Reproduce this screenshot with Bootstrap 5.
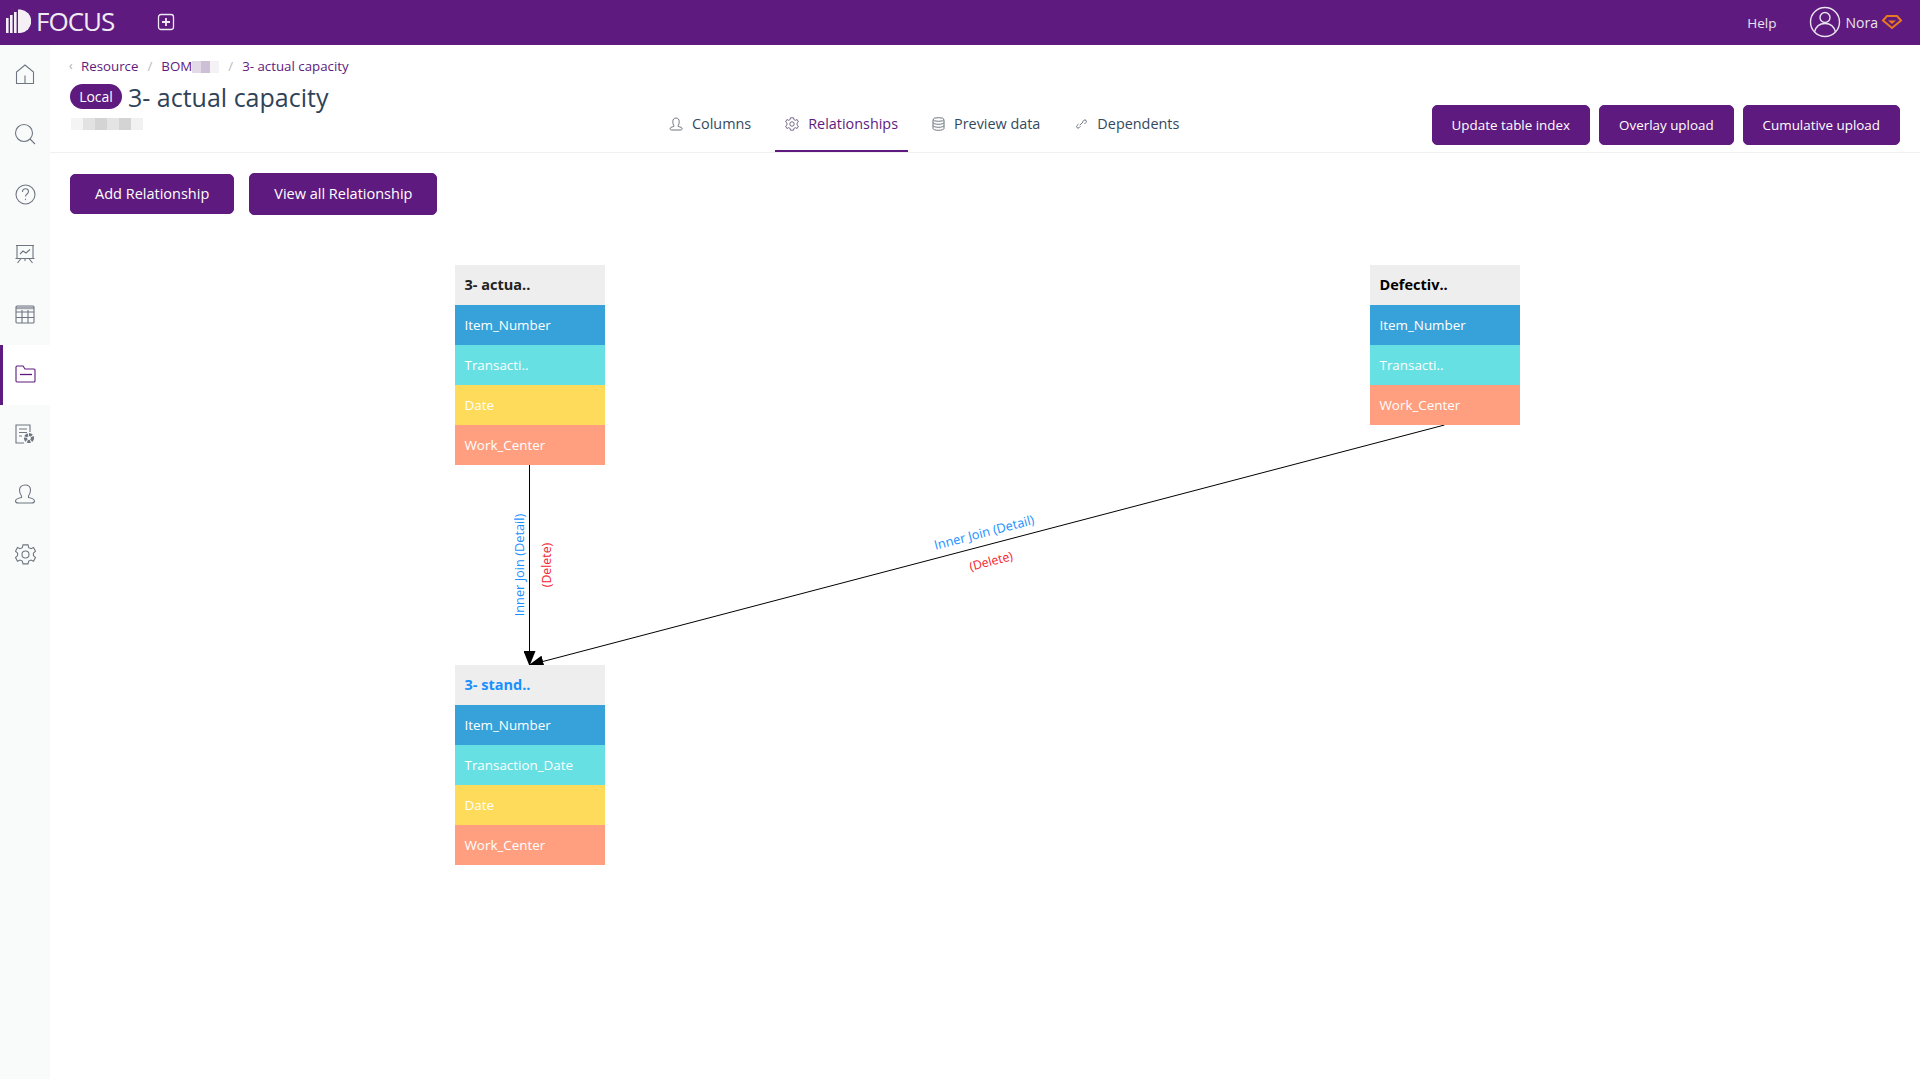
<!DOCTYPE html>
<html>
<head>
    <title>FOCUS - 3- actual capacity</title>
    <link rel="stylesheet" href="https://cdn.jsdelivr.net/npm/bootstrap@5.3.0/dist/css/bootstrap.min.css">
    <style>
        body { font-family: "Open Sans", "Liberation Sans", sans-serif; font-size: 14px; color: #34495e; height: 1079px; overflow: hidden; }
        .top-bar { height: 45px; background: #5e1a7e; color: #e9e4ee; padding: 0 18px 2px 6px; }
        .brand-name { font-size: 26px; font-weight: 400; letter-spacing: -1px; color: #f1ecf4; margin-left: 5px; width: 117px; line-height: 43px; }
        .help-link { font-size: 13.5px; padding-top: 3px; }
        .user-name { padding-top: 2px; margin-left: 5px; }
        .user-pic { margin-left: 32px; }
        .page-body { height: 1034px; }
        .side-bar { width: 50px; background: #f9fbfb; flex: none; }
        .side-item { height: 60px; display: flex; align-items: center; justify-content: center; padding-bottom: 2px; }
        .side-item.is-active { background: #fff; border-left: 3px solid #5e1a7e; padding-right: 2px; }
        .main-area { min-width: 0; }
        .head-zone { height: 108px; border-bottom: 1px solid #eff0f1; padding-left: 20px; padding-right: 20px; position: relative; }
        .head-left { width: 589px; padding-top: 12px; flex: none; }
        .crumbs { --bs-breadcrumb-margin-bottom: 0; --bs-breadcrumb-divider-color: #bbb; --bs-breadcrumb-item-padding-x: 9px; font-size: 13.3px; line-height: 18px; }
        .crumbs a, .crumbs .breadcrumb-item.active { color: #5e1a7e; text-decoration: none; }
        .back-mark { color: #aaa; font-size: 12px; width: 12px; margin-left: -1px; }
        .blur-row { display: inline-flex; vertical-align: middle; }
        .blur-row i { display: block; width: 9px; height: 12px; }
        .sub-blur i { width: 12px; }
        .title-row { margin-top: 7px; height: 30px; }
        .tag-local { background: #5e1a7e; color: #fff; font-size: 14px; font-weight: 400; border-radius: 13px; height: 25px; width: 52px; line-height: 25px; padding: 0; margin-right: 6px; margin-top: -2px; }
        .page-title { font-size: 25px; font-weight: 400; margin: 0; color: #2f4358; line-height: 30px; }
        .sub-blur { margin-left: 1px; }
        .tab-strip { gap: 14px; align-self: flex-end; }
        .tab-strip .nav-link { color: #34495e; padding: 0 10px; height: 46px; line-height: 36px; border-bottom: 2px solid transparent; display: flex; align-items: flex-start; gap: 9px; font-size: 14.4px; }
        .tab-strip .nav-link svg { margin-top: 11px; }
        .tab-strip .nav-link.active { color: #5e1a7e; border-bottom-color: #5e1a7e; }
        .tab-strip .dep-tab { margin-left: 2px; gap: 10px; }
        .btn-focus { --bs-btn-bg: #5e1a7e; --bs-btn-border-color: #5e1a7e; --bs-btn-color: #fff; --bs-btn-hover-bg: #4f1569; --bs-btn-hover-color: #fff; --bs-btn-border-radius: 5px; }
        .head-btns { gap: 9px; margin-left: auto; padding-top: 60px; }
        .head-btns .btn { height: 40px; padding: 0 19px; font-size: 13.4px; }
        .tool-row { padding: 20px 0 0 20px; gap: 15px; align-items: center; }
        .tool-row .btn { height: 40px; padding: 0 24px; font-size: 14.5px; }
        .tool-row .btn + .btn { height: 42px; }
        .rel-canvas { position: absolute; left: 0; top: 0; width: 1920px; height: 1079px; pointer-events: none; }
        .rel-canvas svg { position: absolute; left: 0; top: 0; }
        .rel-node { position: absolute; width: 150px; }
        .rel-node div { height: 40px; line-height: 40px; padding-left: 10px; color: #fff; font-size: 13.4px; white-space: nowrap; }
        .rel-node .node-head { background: #eeeeee; color: #222; font-weight: 700; font-size: 14.5px; line-height: 40px; }
        .node-head.is-target { color: #1890ff !important; }
        .node-head.is-source { color: #000 !important; }
        .c-blue { background: #37a2da; }
        .c-cyan { background: #67e0e3; }
        .c-yellow { background: #ffdb5c; }
        .c-salmon { background: #ff9f7f; }
        .link-label { font-family: "Open Sans", "Liberation Sans", sans-serif; font-size: 12.8px; }
        .link-del { font-size: 12.3px; }
    </style>
</head>
<body>
    <!-- top bar -->
    <div class="top-bar d-flex align-items-center">
        <svg width="25" height="25" viewBox="0 0 25 25" fill="#f4f0f6">
            <rect x="0" y="9" width="2.6" height="15"/>
            <rect x="4" y="6" width="2.6" height="18"/>
            <rect x="8" y="3" width="2.6" height="21"/>
            <path d="M12 0.5h2.5a11.8 11.8 0 0 1 0 23.5H12z"/>
        </svg>
        <span class="brand-name">FOCUS</span>
        <svg class="ms-1" width="18" height="18" viewBox="0 0 18 18" fill="none" stroke="#efe9f2" stroke-width="1.3">
            <rect x="1.5" y="1.5" width="15" height="15" rx="2.5"/>
            <path d="M9 5v8M5 9h8" stroke-width="1.8"/>
        </svg>
        <span class="ms-auto help-link">Help</span>
        <svg class="user-pic" width="32" height="32" viewBox="0 0 32 32" fill="none" stroke="#e9e4ee" stroke-width="1.4">
            <circle cx="16" cy="16" r="14.5"/>
            <circle cx="16" cy="11.5" r="5"/>
            <path d="M5.5 26c1.5-6 6-8.500 10.500-8.500s9 2.500 10.500 8.500"/>
        </svg>
        <span class="user-name">Nora</span>
        <svg class="ms-1" width="20" height="16" viewBox="0 0 20 16" fill="none" stroke="#e8791f" stroke-width="2">
            <path d="M5 2h10l4 4.500L10 14 1 6.500z"/>
            <path d="M6 6.500h8L10 10z" fill="#e8791f" stroke="none"/>
        </svg>
    </div>

    <div class="page-body d-flex">
        <!-- left menu -->
        <div class="side-bar">
            <div class="side-item"><svg width="20" height="21" viewBox="0 0 20 21" fill="none" stroke="#6f7680" stroke-width="1.1"><path d="M1.500 19.500V8L10 1l8.500 7v11.500zM10 19.500v-8"/></svg></div>
            <div class="side-item"><svg width="22" height="22" viewBox="0 0 22 22" fill="none" stroke="#6f7680" stroke-width="1.1"><circle cx="10" cy="10" r="8.500"/><path d="M16 16l5 5"/></svg></div>
            <div class="side-item"><svg width="21" height="21" viewBox="0 0 21 21" fill="none" stroke="#6f7680" stroke-width="1.1"><circle cx="10.500" cy="10.500" r="9.500"/><path d="M7.500 8c0-2 1.300-3.200 3-3.200s3 1.200 3 2.800c0 2.400-3 2.400-3 5"/><path d="M10.500 14.800v1.300"/></svg></div>
            <div class="side-item"><svg width="20" height="20" viewBox="0 0 20 20" fill="none" stroke="#6f7680" stroke-width="1.1"><path d="M1 1.500h18M2 1.500v13h16v-13M0.500 14.500h19M6 14.500L2.500 19M14 14.500l3.500 4.500M10 14.500V17"/><path d="M5 10l3-3 3 2 4-3.500"/></svg></div>
            <div class="side-item"><svg width="20" height="19" viewBox="0 0 20 19" fill="none" stroke="#6f7680" stroke-width="1.1"><path d="M1 3h18" stroke-width="2.500" stroke="#a4a9b0"/><rect x="1" y="1" width="18" height="17" rx="1"/><path d="M1 7h18M1 12.500h18M7 5v13M13 5v13"/></svg></div>
            <div class="side-item is-active"><svg width="21" height="18" viewBox="0 0 21 18" fill="none" stroke="#5e1a7e" stroke-width="1.1"><path d="M1 16V2a1 1 0 0 1 1-1h6l2 3h9a1 1 0 0 1 1 1v11a1 1 0 0 1-1 1H2a1 1 0 0 1-1-1z"/><path d="M5 9.500h12" stroke-width="1.300"/></svg></div>
            <div class="side-item"><svg width="20" height="20" viewBox="0 0 20 20" fill="none" stroke="#6f7680" stroke-width="1.1"><path d="M9 19H1V1h14v7"/><path d="M4 5h8M4 8.500h8M4 12h3"/><circle cx="14" cy="14" r="3.500" stroke-width="3.200" stroke-dasharray="3 1"/></svg></div>
            <div class="side-item"><svg width="22" height="20" viewBox="0 0 22 20" fill="none" stroke="#6f7680" stroke-width="1.1"><path d="M7.500 12c-1.500-2-2-3.500-2-6 0-3 2.300-5 5.500-5s5.500 2 5.500 5c0 2.500-.5 4-2 6v1.500c4 .8 6 2 6 3.500 0 1.500-1.500 2-3 2H4.500c-1.500 0-3-.5-3-2 0-1.500 2-2.700 6-3.500z"/></svg></div>
            <div class="side-item"><svg width="21" height="21" viewBox="0 0 21 21" fill="none" stroke="#6f7680" stroke-width="1.1"><path d="M8 1.200h5l.7 2.800 2.300 1 2.500-1.200 2 3.700-2.100 2 0 2.400 2.100 2-2 3.700-2.500-1.200-2.300 1-.7 2.800H8l-.7-2.800-2.300-1-2.500 1.200-2-3.700 2.100-2 0-2.400-2.100-2 2-3.700L5 5l2.300-1z" transform="translate(0 -.3)"/><circle cx="10.500" cy="10.500" r="3.500"/></svg></div>
        </div>

        <div class="main-area flex-grow-1">
            <!-- header with tabs -->
            <div class="head-zone d-flex">
                <div class="head-left">
                    <nav>
                        <ol class="breadcrumb crumbs">
                            <li class="back-mark">&lsaquo;</li>
                            <li class="breadcrumb-item ps-0"><a href="#">Resource</a></li>
                            <li class="breadcrumb-item"><a href="#">BOM<span class="blur-row"><i style="background:#e3dae8"></i><i style="background:#cdbfd6"></i><i style="background:#f5f2f6"></i></span></a></li>
                            <li class="breadcrumb-item active">3- actual capacity</li>
                        </ol>
                    </nav>
                    <div class="title-row d-flex align-items-center">
                        <span class="badge tag-local">Local</span>
                        <h1 class="page-title">3- actual capacity</h1>
                    </div>
                    <div class="blur-row sub-blur"><i style="background:#f4f4f4"></i><i style="background:#e2e2e2"></i><i style="background:#d4d4d4"></i><i style="background:#e4e4e4"></i><i style="background:#d4d4d4"></i><i style="background:#f1f1f1"></i></div>
                </div>
                <ul class="nav tab-strip">
                    <li class="nav-item"><a class="nav-link" href="#"><svg width="14" height="14" viewBox="0 0 14 14" fill="none" stroke="#6f7680"><path d="M4.800 8.500C4 7.500 3.800 6 3.800 4.500 3.800 2.500 5 1 7 1s3.200 1.500 3.200 3.500c0 1.500-.2 3-1 4v1c2.500.5 4 1.200 4 2.200 0 1-1 1.300-2 1.300H3c-1 0-2-.3-2-1.300 0-1 1.500-1.700 3.800-2.200z"/></svg>Columns</a></li>
                    <li class="nav-item"><a class="nav-link active" href="#"><svg width="14" height="14" viewBox="0 0 14 14" fill="none" stroke="#7a6a88"><path d="M5.500.8h3l.4 1.800 1.500.7 1.700-.8 1.300 2.400-1.400 1.200v1.800l1.400 1.200-1.300 2.400-1.700-.8-1.500.7-.4 1.800h-3l-.4-1.800-1.500-.7-1.700.8L.6 9.100 2 7.900V6.100L.6 4.900l1.300-2.400 1.700.8 1.500-.7z"/><circle cx="7" cy="7" r="2.200"/></svg>Relationships</a></li>
                    <li class="nav-item"><a class="nav-link" href="#"><svg width="13" height="14" viewBox="0 0 13 14" fill="none" stroke="#6f7680"><ellipse cx="6.500" cy="2.500" rx="5.500" ry="1.800"/><path d="M1 2.500v9c0 1 2.500 1.800 5.500 1.800s5.500-.8 5.500-1.800v-9M1 5.500c0 1 2.500 1.800 5.500 1.800s5.500-.8 5.500-1.800M1 8.500c0 1 2.500 1.800 5.500 1.800s5.500-.8 5.500-1.800"/></svg>Preview data</a></li>
                    <li class="nav-item"><a class="nav-link dep-tab" href="#"><svg width="11" height="14" viewBox="0 0 11 14" fill="none" stroke="#6f7680"><path d="M4.500 9.300L3 10.800a1.500 1.500 0 0 1-2.100-2.100l1.700-1.700M6.500 4.700L8 3.200a1.500 1.500 0 0 1 2.100 2.100L8.400 7M3.800 8.300l3.400-3.600"/></svg>Dependents</a></li>
                </ul>
                <div class="head-btns d-flex">
                    <button class="btn btn-focus">Update table index</button>
                    <button class="btn btn-focus">Overlay upload</button>
                    <button class="btn btn-focus">Cumulative upload</button>
                </div>
            </div>
            <div class="tool-row d-flex">
                <button class="btn btn-focus">Add Relationship</button>
                <button class="btn btn-focus">View all Relationship</button>
            </div>
        </div>
    </div>

    <!-- relationship diagram, free canvas -->
    <div class="rel-canvas">
        <svg width="1920" height="1079" viewBox="0 0 1920 1079">
            <defs>
                <marker id="arrow-end" markerWidth="16" markerHeight="12" refX="14" refY="6" orient="auto" markerUnits="userSpaceOnUse">
                    <path d="M0 0L15 6L0 12z" fill="#000"/>
                </marker>
            </defs>
            <line x1="529.5" y1="465" x2="529.5" y2="665" stroke="#000" stroke-width="1" marker-end="url(#arrow-end)"/>
            <line x1="1444.5" y1="425" x2="529.5" y2="665" stroke="#000" stroke-width="1" marker-end="url(#arrow-end)"/>
            <text class="link-label" fill="#1890ff" text-anchor="middle" dominant-baseline="central" transform="translate(519 565) rotate(-90)">Inner Join (Detail)</text>
            <text class="link-label link-del" fill="#f5222d" text-anchor="middle" dominant-baseline="central" transform="translate(546 565) rotate(-90)">(Delete)</text>
            <text class="link-label" fill="#1890ff" text-anchor="middle" dominant-baseline="central" transform="translate(984 532) rotate(-14.7)">Inner Join (Detail)</text>
            <text class="link-label link-del" fill="#f5222d" text-anchor="middle" dominant-baseline="central" transform="translate(991 561) rotate(-14.7)">(Delete)</text>
        </svg>
        <div class="rel-node" style="left:454.5px;top:265px">
            <div class="node-head">3- actua..</div>
            <div class="c-blue">Item_Number</div>
            <div class="c-cyan">Transacti..</div>
            <div class="c-yellow">Date</div>
            <div class="c-salmon">Work_Center</div>
        </div>
        <div class="rel-node" style="left:1369.5px;top:265px">
            <div class="node-head is-source">Defectiv..</div>
            <div class="c-blue">Item_Number</div>
            <div class="c-cyan">Transacti..</div>
            <div class="c-salmon">Work_Center</div>
        </div>
        <div class="rel-node" style="left:454.5px;top:665px">
            <div class="node-head is-target">3- stand..</div>
            <div class="c-blue">Item_Number</div>
            <div class="c-cyan">Transaction_Date</div>
            <div class="c-yellow">Date</div>
            <div class="c-salmon">Work_Center</div>
        </div>
    </div>

    <script src="https://cdn.jsdelivr.net/npm/bootstrap@5.3.0/dist/js/bootstrap.bundle.min.js"></script>
</body>
</html>
